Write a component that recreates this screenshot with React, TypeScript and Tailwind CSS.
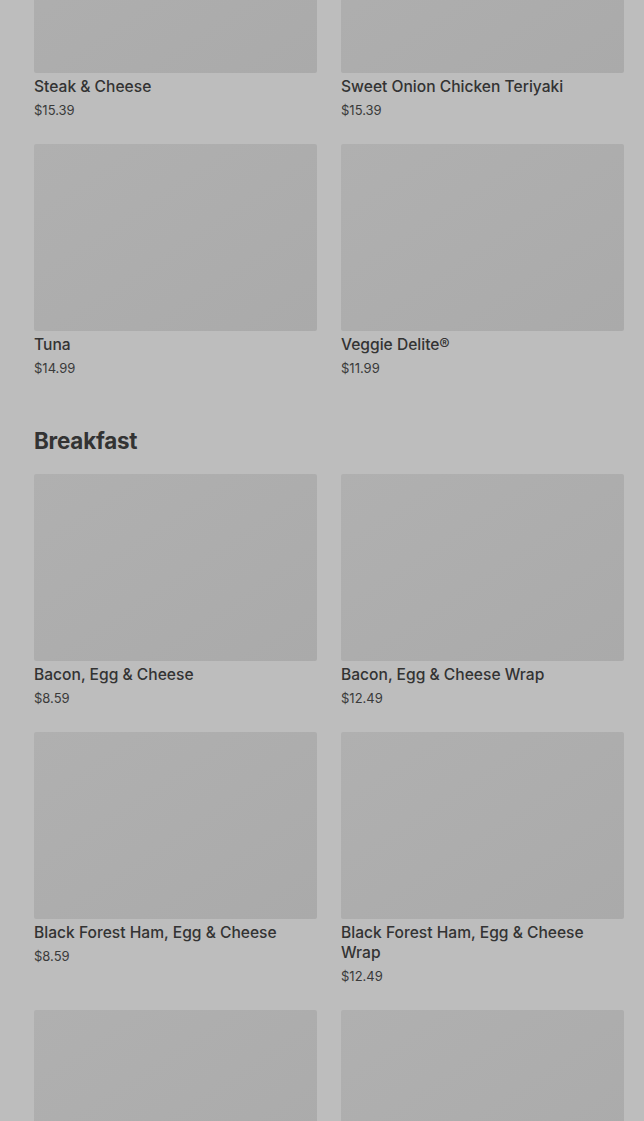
import React from 'react';

type Item = { name: string; price: string };

const subs: Item[] = [
  { name: 'Steak & Cheese', price: '$15.39' },
  { name: 'Sweet Onion Chicken Teriyaki', price: '$15.39' },
  { name: 'Tuna', price: '$14.99' },
  { name: 'Veggie Delite®', price: '$11.99' },
];

const breakfast: Item[] = [
  { name: 'Bacon, Egg & Cheese', price: '$8.59' },
  { name: 'Bacon, Egg & Cheese Wrap', price: '$12.49' },
  { name: 'Black Forest Ham, Egg & Cheese', price: '$8.59' },
  { name: 'Black Forest Ham, Egg & Cheese Wrap', price: '$12.49' },
  { name: '', price: '' },
  { name: '', price: '' },
];

const MenuCard = ({ item }: { item: Item }) => (
  <div className="flex flex-col">
    <div className="h-[187px] w-full rounded-[2px] bg-gradient-to-br from-[#b0b0b0] to-[#aaaaaa]" />
    <div className="pt-1">
      <div className="text-[15.6px] leading-5 font-medium text-[#333333]">{item.name}</div>
      <div className="mt-1 text-[13px] leading-[19px] text-[#3a3a3a]">{item.price}</div>
    </div>
  </div>
);

export default function App() {
  return (
    <div className="h-[1121px] overflow-hidden bg-[#bdbdbd]" style={{ fontFamily: 'Inter, "Noto Sans", sans-serif' }}>
      <div className="-mt-[114px] pl-[34px] pr-[20px]">
        {/* Subs section (scrolled) */}
        <div className="grid grid-cols-2 gap-x-6 gap-y-6">
          {subs.map((item) => (
            <MenuCard key={item.name} item={item} />
          ))}
        </div>

        {/* Breakfast */}
        <h2 className="mt-[49px] mb-[19px] text-[22.4px] leading-7 font-bold text-[#333333] tracking-[-0.2px]">
          Breakfast
        </h2>
        <div className="grid grid-cols-2 gap-x-6 gap-y-6">
          {breakfast.map((item, i) => (
            <MenuCard key={i} item={item} />
          ))}
        </div>
      </div>
    </div>
  );
}
